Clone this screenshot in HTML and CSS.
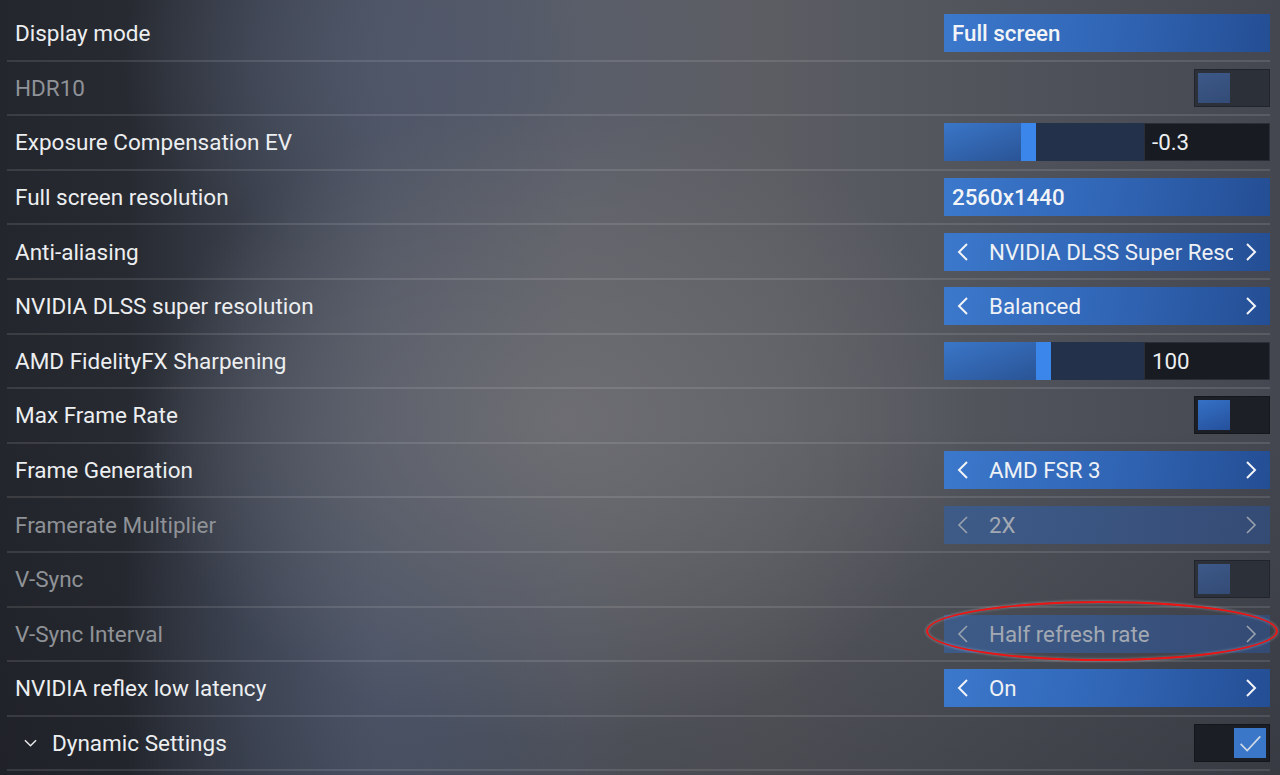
FILE: index.html
```html
<!DOCTYPE html>
<html lang="en">
<head>
<meta charset="utf-8">
<title>Graphics settings</title>
<link rel="stylesheet" href="styles.css">
</head>
<body>
<div class="panel">
  <div class="row">
    <span class="label">Display mode</span>
    <div class="ctl dropdown"><span class="val strong">Full screen</span></div>
  </div>
  <div class="row disabled">
    <span class="label">HDR10</span>
    <div class="toggle off-dis"><span class="knob"></span></div>
  </div>
  <div class="row">
    <span class="label">Exposure Compensation EV</span>
    <div class="ctl slider">
      <span class="fill" style="width:77px"></span><span class="handle"></span><span class="track"></span><span class="num">-0.3</span>
    </div>
  </div>
  <div class="row">
    <span class="label">Full screen resolution</span>
    <div class="ctl dropdown"><span class="val strong">2560x1440</span></div>
  </div>
  <div class="row">
    <span class="label">Anti-aliasing</span>
    <div class="ctl selector">
      <svg class="arr" viewBox="0 0 12 18"><polyline points="10,1 2,9 10,17"/></svg>
      <span class="opt">NVIDIA DLSS Super Resolution</span>
      <svg class="arr" viewBox="0 0 12 18"><polyline points="2,1 10,9 2,17"/></svg>
    </div>
  </div>
  <div class="row">
    <span class="label">NVIDIA DLSS super resolution</span>
    <div class="ctl selector">
      <svg class="arr" viewBox="0 0 12 18"><polyline points="10,1 2,9 10,17"/></svg>
      <span class="opt">Balanced</span>
      <svg class="arr" viewBox="0 0 12 18"><polyline points="2,1 10,9 2,17"/></svg>
    </div>
  </div>
  <div class="row">
    <span class="label">AMD FidelityFX Sharpening</span>
    <div class="ctl slider">
      <span class="fill" style="width:92px"></span><span class="handle"></span><span class="track"></span><span class="num">100</span>
    </div>
  </div>
  <div class="row">
    <span class="label">Max Frame Rate</span>
    <div class="toggle off"><span class="knob"></span></div>
  </div>
  <div class="row">
    <span class="label">Frame Generation</span>
    <div class="ctl selector">
      <svg class="arr" viewBox="0 0 12 18"><polyline points="10,1 2,9 10,17"/></svg>
      <span class="opt">AMD FSR 3</span>
      <svg class="arr" viewBox="0 0 12 18"><polyline points="2,1 10,9 2,17"/></svg>
    </div>
  </div>
  <div class="row disabled">
    <span class="label">Framerate Multiplier</span>
    <div class="ctl selector dis">
      <svg class="arr" viewBox="0 0 12 18"><polyline points="10,1 2,9 10,17"/></svg>
      <span class="opt">2X</span>
      <svg class="arr" viewBox="0 0 12 18"><polyline points="2,1 10,9 2,17"/></svg>
    </div>
  </div>
  <div class="row disabled">
    <span class="label">V-Sync</span>
    <div class="toggle off-dis"><span class="knob"></span></div>
  </div>
  <div class="row disabled">
    <span class="label">V-Sync Interval</span>
    <div class="ctl selector dis marked">
      <svg class="arr" viewBox="0 0 12 18"><polyline points="10,1 2,9 10,17"/></svg>
      <span class="opt">Half refresh rate</span>
      <svg class="arr" viewBox="0 0 12 18"><polyline points="2,1 10,9 2,17"/></svg>
      <span class="ring"></span>
    </div>
  </div>
  <div class="row">
    <span class="label">NVIDIA reflex low latency</span>
    <div class="ctl selector">
      <svg class="arr" viewBox="0 0 12 18"><polyline points="10,1 2,9 10,17"/></svg>
      <span class="opt">On</span>
      <svg class="arr" viewBox="0 0 12 18"><polyline points="2,1 10,9 2,17"/></svg>
    </div>
  </div>
  <div class="row">
    <span class="label group">
      <svg class="chev" viewBox="0 0 14 8"><polyline points="1,1 7,7 13,1"/></svg>
      Dynamic Settings
    </span>
    <div class="toggle on"><span class="knob"><svg viewBox="0 0 32 32"><polyline points="6,17 13,24 27,9"/></svg></span></div>
  </div>
</div>
</body>
</html>
```

FILE: styles.css
```css
html, body {
  margin: 0;
  padding: 0;
  height: 100%;
}

body {
  width: 1280px;
  height: 775px;
  overflow: hidden;
  font-family: Roboto, "Noto Sans", "Liberation Sans", sans-serif;
  color: #e9eaec;
  background:
    radial-gradient(ellipse 420px 320px at 560px 420px, rgba(112,112,116,0.85) 0%, rgba(112,112,116,0) 100%),
    radial-gradient(ellipse 260px 500px at 380px 650px, rgba(78,88,110,0.7) 0%, rgba(78,88,110,0) 100%),
    radial-gradient(ellipse 300px 200px at 420px 60px, rgba(80,88,108,0.7) 0%, rgba(80,88,108,0) 100%),
    linear-gradient(180deg, rgba(0,0,0,0) 55%, rgba(20,22,28,0.25) 100%),
    linear-gradient(90deg, #23262c 0%, #272a31 10%, #3a404c 20%, #4e5462 30%, #5d6068 45%, #5b5d63 60%, #52555c 75%, #4a4d55 90%, #44474f 100%);
}

.panel {
  margin: 0 10px 0 7px;
  padding-top: 7px;
}

.row {
  height: 54.6px;
  box-sizing: border-box;
  border-bottom: 2px solid rgba(255,255,255,0.11);
  display: flex;
  align-items: center;
  justify-content: space-between;
  padding-left: 8px;
}

.label {
  font-size: 22.5px;
  color: #eceef0;
  display: flex;
  align-items: center;
}

.disabled .label {
  color: #8f9297;
}

.group .chev {
  width: 13px;
  height: 8px;
  margin: 0 15px 0 9px;
  fill: none;
  stroke: #e6e8ea;
  stroke-width: 1.6;
}

.ctl {
  width: 326px;
  height: 38px;
  box-sizing: border-box;
  display: flex;
  align-items: center;
  position: relative;
  font-size: 22.3px;
}

.dropdown,
.selector {
  background: linear-gradient(100deg, #3b78cc 0%, #3166b6 50%, #244e94 100%);
}

.dropdown {
  padding-left: 8px;
}

.val.strong {
  font-weight: 500;
  color: #f2f4f7;
}

.selector {
  padding: 0 13px;
}

.selector .arr {
  width: 12px;
  height: 18px;
  flex: none;
  fill: none;
  stroke: #f2f4f7;
  stroke-width: 2;
}

.selector .opt {
  flex: 1;
  margin: 0 12px 0 20px;
  white-space: nowrap;
  overflow: hidden;
  color: #eef1f5;
}

.selector.dis {
  background: linear-gradient(100deg, #3e5b88 0%, #3a5480 50%, #344b74 100%);
}

.selector.dis .opt {
  color: #a3a9b2;
}

.selector.dis .arr {
  stroke: #9aa2ae;
  stroke-width: 1.6;
}

.ring {
  position: absolute;
  left: -18px;
  top: -14px;
  width: 352px;
  height: 60px;
  box-sizing: border-box;
  border: 2.5px solid #f01515;
  border-radius: 50%;
  box-shadow: 0 0 3px rgba(235,235,240,0.5), inset 0 0 3px rgba(235,235,240,0.4);
}

.slider {
  overflow: hidden;
}

.slider .fill {
  height: 100%;
  background: linear-gradient(160deg, #3a76c8 0%, #2a5496 100%);
}

.slider .handle {
  width: 15px;
  height: 100%;
  background: #3a86ea;
}

.slider .track {
  flex: 1;
  height: 100%;
  background: #23324a;
}

.slider .num {
  width: 126px;
  height: 100%;
  box-sizing: border-box;
  padding-left: 7px;
  display: flex;
  align-items: center;
  background: #181b22;
  color: #eceef0;
  border: 1px solid #2a2e36;
}

.toggle {
  width: 76px;
  height: 38px;
  box-sizing: border-box;
  padding: 3px;
  display: flex;
  border: 1px solid rgba(0,0,0,0.25);
}

.toggle .knob {
  width: 32px;
  height: 30px;
  display: block;
}

.toggle.off-dis {
  background: #2c3039;
}

.toggle.off-dis .knob {
  background: linear-gradient(160deg, #3d5988 0%, #334b76 100%);
}

.toggle.off {
  background: #1c1f26;
}

.toggle.off .knob {
  background: linear-gradient(160deg, #3571c6 0%, #25509c 100%);
}

.toggle.on {
  background: #1b1e25;
  justify-content: flex-end;
}

.toggle.on .knob {
  background: #3a77c9;
}

.toggle.on .knob svg {
  width: 32px;
  height: 30px;
  fill: none;
  stroke: #cfd9e6;
  stroke-width: 1.8;
}
```
